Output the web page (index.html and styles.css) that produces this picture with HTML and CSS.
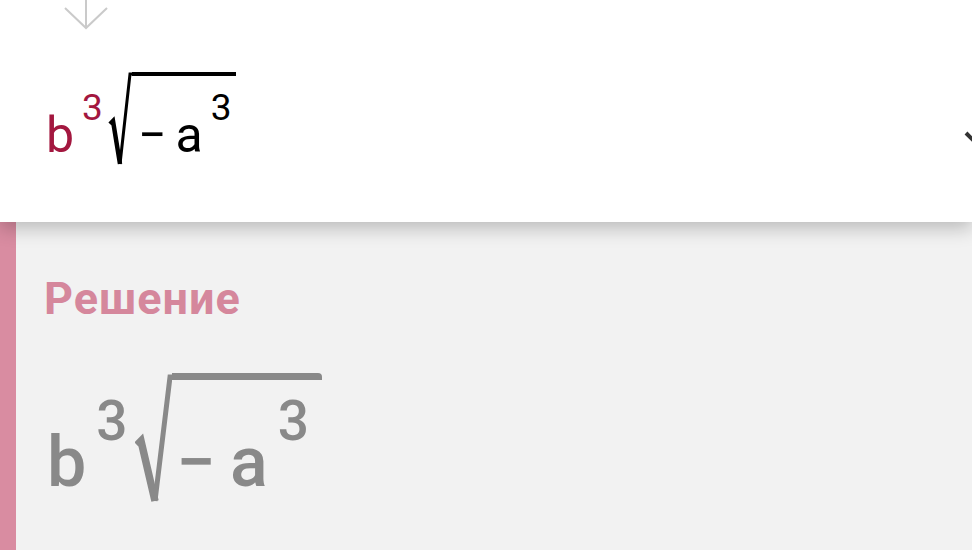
FILE: index.html
```html
<!DOCTYPE html>
<html lang="ru">
<head>
<meta charset="utf-8">
<title>Решение</title>
<link rel="stylesheet" href="styles.css">
</head>
<body>
<div class="page">
  <section class="question">
    <svg class="arrow" width="48" height="30" viewBox="0 0 48 30">
      <path d="M22 0 V27 M1 8 L22 28 L43 8" fill="none" stroke="#cacaca" stroke-width="2"/>
    </svg>
    <div class="formula formula-q">
      <span class="base accent">b</span>
      <span class="sup accent">3</span>
      <svg class="radical" width="24" height="94" viewBox="0 0 24 94">
        <path d="M2 52 L5 49 L12 92" fill="none" stroke="#000" stroke-width="4.5" stroke-linejoin="miter"/>
        <path d="M12 92 L22 2 L24 2" fill="none" stroke="#000" stroke-width="3"/>
      </svg>
      <div class="radicand">
        <span class="base minus">−</span>
        <span class="base a">a</span>
        <span class="sup">3</span>
      </div>
    </div>
    <svg class="edge-icon" width="20" height="20" viewBox="0 0 20 20">
      <path d="M2 4 L9 11 L18 2" fill="none" stroke="#333" stroke-width="4"/>
    </svg>
  </section>
  <section class="answer">
    <div class="stripe"></div>
    <div class="content">
      <h2 class="title">Решение</h2>
      <div class="formula formula-a">
        <span class="base">b</span>
        <span class="sup">3</span>
        <svg class="radical" width="37" height="130" viewBox="0 0 37 130">
          <path d="M2 72 L6 68 L20 128" fill="none" stroke="#898989" stroke-width="7.5"/>
          <path d="M20 128 L35 4 L37 4" fill="none" stroke="#898989" stroke-width="5"/>
        </svg>
        <div class="radicand">
          <span class="base minus">−</span>
          <span class="base a">a</span>
          <span class="sup">3</span>
        </div>
      </div>
    </div>
  </section>
</div>
</body>
</html>
```
FILE: styles.css
```css
html, body {
  margin: 0;
  padding: 0;
}
body {
  width: 972px;
  height: 550px;
  overflow: hidden;
  background: #f2f2f2;
  font-family: Roboto, "Noto Sans", sans-serif;
}
.page {
  display: flex;
  flex-direction: column;
  height: 550px;
}
.question {
  position: relative;
  z-index: 1;
  height: 222px;
  flex: none;
  background: #ffffff;
  box-shadow: 0 6px 18px rgba(0, 0, 0, 0.24);
}
.arrow {
  display: block;
  margin-left: 64px;
}
.edge-icon {
  position: absolute;
  right: -12px;
  top: 129px;
}
.formula {
  display: flex;
  align-items: flex-start;
}
.base, .sup {
  display: block;
  line-height: 1;
}
.radical {
  display: block;
  flex: none;
}
.radicand {
  display: flex;
  align-items: flex-start;
}

/* question formula */
.formula-q {
  margin-top: 42px;
  padding-left: 46px;
  color: #000;
}
.formula-q .base {
  font-size: 50px;
  margin-top: 38px;
}
.formula-q .sup {
  font-size: 37px;
  margin-top: 17px;
  margin-left: 8px;
}
.formula-q .radical {
  margin-left: 5px;
}
.formula-q .radicand {
  border-top: 4px solid #000;
  padding-right: 5px;
}
.formula-q .radicand .base {
  margin-top: 34px;
}
.formula-q .radicand .sup {
  margin-top: 13px;
  margin-left: 8px;
}
.formula-q .minus {
  margin-left: 6px;
}
.formula-q .a {
  margin-left: 9px;
}
.accent {
  color: #a3173f;
}

/* answer */
.answer {
  flex: 1;
  display: flex;
}
.stripe {
  width: 16px;
  flex: none;
  background: #d98ca1;
}
.content {
  flex: 1;
  padding: 54px 0 0 27px;
}
.title {
  margin: 0;
  padding-left: 1px;
  font-size: 45px;
  line-height: 1;
  font-weight: 700;
  letter-spacing: 1px;
  color: #d5879c;
}
.formula-a {
  margin-top: 52px;
  color: #898989;
  padding-left: 4px;
}
.formula-a .base {
  font-size: 70px;
  font-weight: 500;
  margin-top: 54px;
}
.formula-a .sup {
  font-size: 55px;
  font-weight: 500;
  margin-top: 21px;
  margin-left: 10px;
}
.formula-a .radical {
  margin-left: 7px;
}
.formula-a .radicand {
  border-top: 7px solid #898989;
  border-top-right-radius: 4px;
  padding-right: 13px;
}
.formula-a .radicand .base {
  margin-top: 47px;
}
.formula-a .radicand .sup {
  margin-top: 14px;
  margin-left: 10px;
}
.formula-a .minus {
  margin-left: 5px;
}
.formula-a .a {
  margin-left: 14px;
}
```
